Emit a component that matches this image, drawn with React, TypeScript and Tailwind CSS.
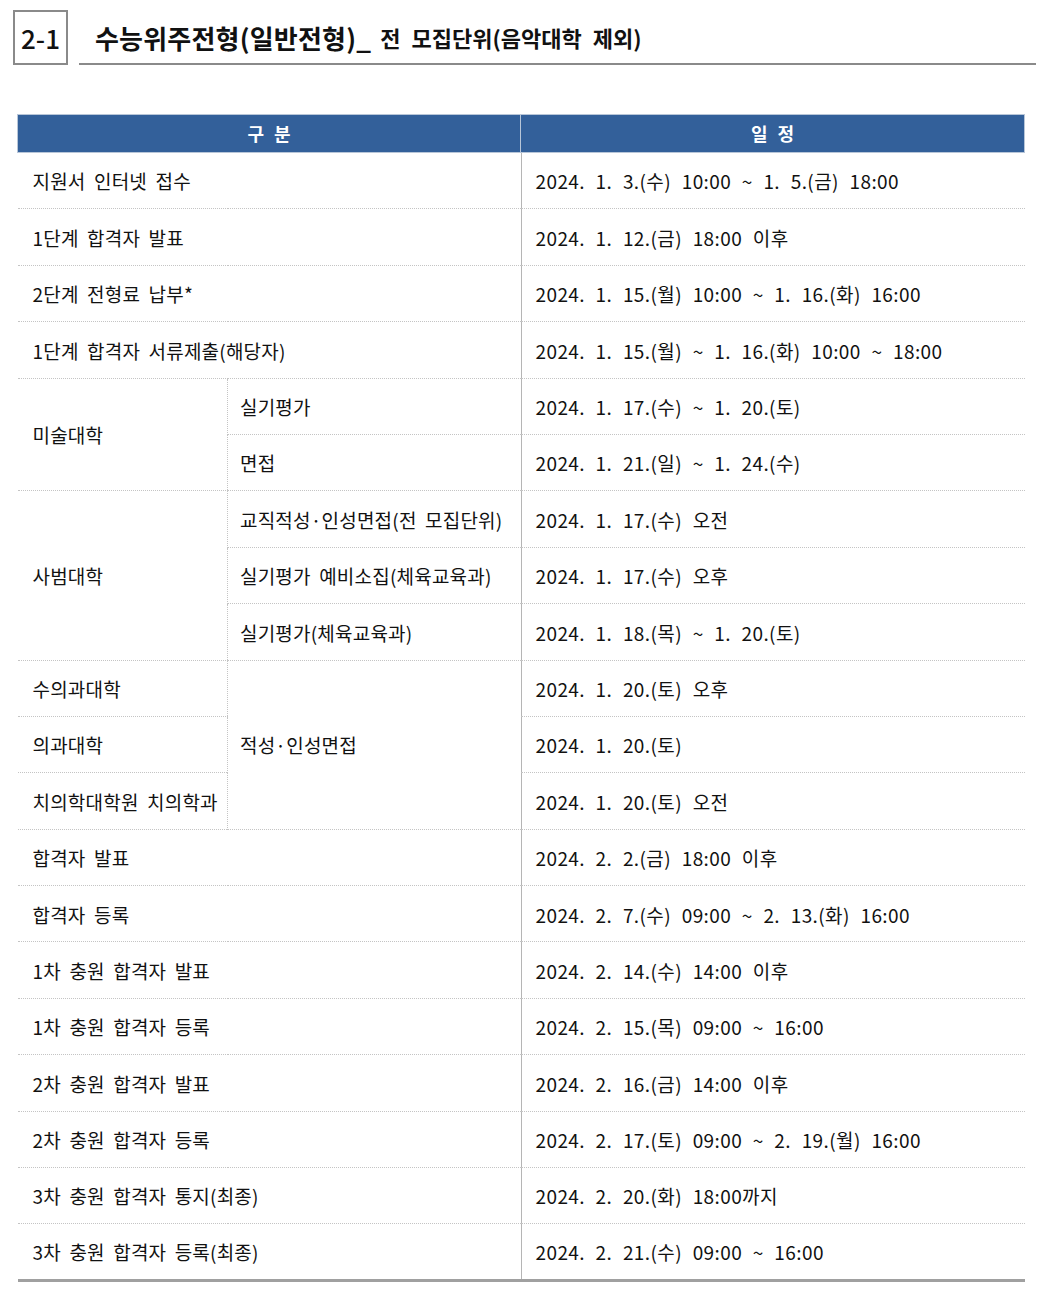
import React from 'react';

type Row = {
  a?: string;
  aSpan?: number;
  aCols?: number;
  b?: string;
  bSpan?: number;
  date: string;
};

const rows: Row[] = [
  { a: '지원서 인터넷 접수', aCols: 2, date: '2024. 1. 3.(수) 10:00 ~ 1. 5.(금) 18:00' },
  { a: '1단계 합격자 발표', aCols: 2, date: '2024. 1. 12.(금) 18:00 이후' },
  { a: '2단계 전형료 납부*', aCols: 2, date: '2024. 1. 15.(월) 10:00 ~ 1. 16.(화) 16:00' },
  { a: '1단계 합격자 서류제출(해당자)', aCols: 2, date: '2024. 1. 15.(월) ~ 1. 16.(화) 10:00 ~ 18:00' },
  { a: '미술대학', aSpan: 2, b: '실기평가', date: '2024. 1. 17.(수) ~ 1. 20.(토)' },
  { b: '면접', date: '2024. 1. 21.(일) ~ 1. 24.(수)' },
  { a: '사범대학', aSpan: 3, b: '교직적성·인성면접(전 모집단위)', date: '2024. 1. 17.(수) 오전' },
  { b: '실기평가 예비소집(체육교육과)', date: '2024. 1. 17.(수) 오후' },
  { b: '실기평가(체육교육과)', date: '2024. 1. 18.(목) ~ 1. 20.(토)' },
  { a: '수의과대학', b: '적성·인성면접', bSpan: 3, date: '2024. 1. 20.(토) 오후' },
  { a: '의과대학', date: '2024. 1. 20.(토)' },
  { a: '치의학대학원 치의학과', date: '2024. 1. 20.(토) 오전' },
  { a: '합격자 발표', aCols: 2, date: '2024. 2. 2.(금) 18:00 이후' },
  { a: '합격자 등록', aCols: 2, date: '2024. 2. 7.(수) 09:00 ~ 2. 13.(화) 16:00' },
  { a: '1차 충원 합격자 발표', aCols: 2, date: '2024. 2. 14.(수) 14:00 이후' },
  { a: '1차 충원 합격자 등록', aCols: 2, date: '2024. 2. 15.(목) 09:00 ~ 16:00' },
  { a: '2차 충원 합격자 발표', aCols: 2, date: '2024. 2. 16.(금) 14:00 이후' },
  { a: '2차 충원 합격자 등록', aCols: 2, date: '2024. 2. 17.(토) 09:00 ~ 2. 19.(월) 16:00' },
  { a: '3차 충원 합격자 통지(최종)', aCols: 2, date: '2024. 2. 20.(화) 18:00까지' },
  { a: '3차 충원 합격자 등록(최종)', aCols: 2, date: '2024. 2. 21.(수) 09:00 ~ 16:00' },
];

const font = { fontFamily: '"Noto Sans CJK KR", "Noto Sans", sans-serif' };

const App = () => {
  return (
    <div className="w-[1040px] min-h-[1294px] bg-white text-[#111]" style={font}>
      {/* Title */}
      <div className="flex items-end pl-[13px] pr-[4px] pt-[10px]">
        <div className="w-[55px] h-[55px] border-2 border-[#8a8a8a] flex items-center justify-center text-[26px] font-medium leading-none">
          2-1
        </div>
        <div className="flex-1 ml-[11px] border-b-2 border-[#8a8a8a] h-[55px] flex items-center pl-[16px] pt-[2px]">
          <span className="text-[26px] font-bold tracking-[0.2px]">수능위주전형(일반전형)_</span>
          <span className="text-[22px] font-bold ml-[9px] [word-spacing:6px]">전 모집단위(음악대학 제외)</span>
        </div>
      </div>

      {/* Schedule table */}
      <table className="ml-[17px] mt-[49px] w-[1007px] table-fixed border-collapse text-[19px]">
        <colgroup>
          <col className="w-[210px]" />
          <col className="w-[293px]" />
          <col className="w-[504px]" />
        </colgroup>
        <thead>
          <tr className="h-[38px] bg-[#33609a] text-white text-[18px] font-bold">
            <th colSpan={2} className="border border-[#b8c6d8] font-bold [word-spacing:6px]">구 분</th>
            <th className="border border-[#b8c6d8] font-bold [word-spacing:6px]">일 정</th>
          </tr>
        </thead>
        <tbody className="border-b-[3px] border-[#a0a0a0]">
          {rows.map((r, i) => (
            <tr key={i} className="h-[56.4px]">
              {r.a !== undefined && (
                <td
                  colSpan={r.aCols}
                  rowSpan={r.aSpan}
                  className="pl-[15px] pt-[2px] border-b border-dotted border-[#c4c4c4] tracking-[0.2px] [word-spacing:4px] whitespace-nowrap"
                >
                  {r.a}
                </td>
              )}
              {r.b !== undefined && (
                <td
                  rowSpan={r.bSpan}
                  className="pl-[12px] pt-[2px] border-b border-l border-dotted border-[#c4c4c4] tracking-[0.2px] [word-spacing:4px] whitespace-nowrap"
                >
                  {r.b}
                </td>
              )}
              <td className="pl-[15px] pt-[2px] border-b border-dotted border-[#c4c4c4] tracking-[0.4px] [word-spacing:6px] whitespace-nowrap relative">
                <span className="absolute left-0 top-0 bottom-0 border-l border-[#b5b5b5]" />
                {r.date}
              </td>
            </tr>
          ))}
        </tbody>
      </table>
    </div>
  );
};

export default App;
